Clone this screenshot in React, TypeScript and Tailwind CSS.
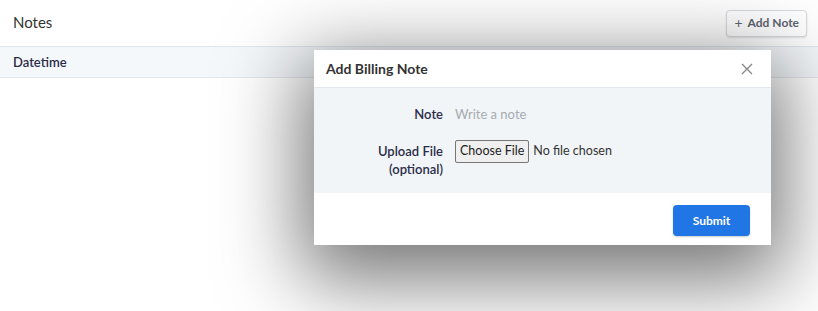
import React from "react";

export default function App() {
  return (
    <div className="relative w-[818px] h-[311px] overflow-hidden bg-white" style={{ fontFamily: "Lato, 'Liberation Sans', sans-serif" }}>
      <div className="flex items-center justify-between h-[47px] pl-[13px] pr-[11px] border-b border-[#e3e8ee]">
        <div className="text-[15px] text-[#333] -mt-[2px]">Notes</div>
        <button className="flex items-center gap-[5px] h-[27px] px-[7px] rounded-[4px] border border-[#d6dbe0] bg-white shadow-[0_1px_2px_rgba(0,0,0,0.12)] text-[12px] font-bold text-[#5e6470]">
          <span className="text-[14px] font-normal leading-none">+</span>
          <span>Add Note</span>
        </button>
      </div>
      <div className="flex items-center h-[31px] pl-[13px] pt-[2px] bg-[#f5f8fb] border-b border-[#e3e8ee] text-[13px] font-semibold text-[#2b2d4a]">
        Datetime
      </div>

      <div className="absolute left-[314px] top-[50px] w-[457px] bg-white shadow-[0_22px_80px_12px_rgba(0,0,0,0.55)]">
        <div className="flex items-center justify-between h-[38px] pl-[12px] pr-[18px] border-b border-[#e3e8ee]">
          <div className="text-[14px] font-bold text-[#333]">Add Billing Note</div>
          <svg width="12" height="12" viewBox="0 0 12 12" stroke="#888" strokeWidth="1.4" fill="none">
            <path d="M1 1L11 11M11 1L1 11" />
          </svg>
        </div>
        <div className="bg-[#f1f5f8] pt-[17px] pb-[15px]">
          <div className="flex items-center">
            <div className="w-[129px] text-right text-[13px] font-semibold text-[#2b2d4a]">Note</div>
            <div className="ml-[12px] text-[13px] text-[#a8abb0]">Write a note</div>
          </div>
          <div className="flex items-start mt-[14px]">
            <div className="w-[129px] text-right text-[13px] font-semibold text-[#2b2d4a] leading-[18px] pt-[3px]">
              Upload File<br />(optional)
            </div>
            <div className="ml-[12px] flex items-center mt-[1px]">
              <span className="h-[23px] px-[4px] flex items-center border border-[#767676] rounded-[2px] bg-[#efefef] text-[12.5px] text-[#222]">Choose File</span>
              <span className="ml-[4px] text-[12.5px] text-[#333]">No file chosen</span>
            </div>
          </div>
        </div>
        <div className="flex justify-end items-center h-[52px] pr-[21px] pt-[4px]">
          <button className="w-[77px] h-[31px] rounded-[4px] bg-[#2176e6] text-white text-[12px] font-bold shadow-[0_1px_2px_rgba(0,0,0,0.2)]">Submit</button>
        </div>
      </div>
    </div>
  );
}
